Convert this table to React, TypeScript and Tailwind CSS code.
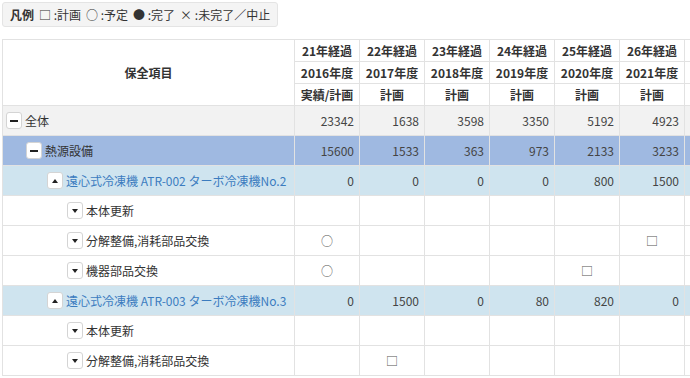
import type { ReactNode } from 'react';

type Row = {
  label: string;
  level: number;
  kind: 'total' | 'group' | 'equip' | 'item';
  toggle: 'minus' | 'up' | 'down';
  cells: (string | number)[];
};

// the 7th column runs past the window edge, so only its border shows
const YEARS = [
  { age: '21年経過', year: '2016年度', type: '実績/計画' },
  { age: '22年経過', year: '2017年度', type: '計画' },
  { age: '23年経過', year: '2018年度', type: '計画' },
  { age: '24年経過', year: '2019年度', type: '計画' },
  { age: '25年経過', year: '2020年度', type: '計画' },
  { age: '26年経過', year: '2021年度', type: '計画' },
  { age: '', year: '', type: '' },
];

const ROWS: Row[] = [
  { label: '全体', level: 0, kind: 'total', toggle: 'minus', cells: [23342, 1638, 3598, 3350, 5192, 4923, ''] },
  { label: '熱源設備', level: 1, kind: 'group', toggle: 'minus', cells: [15600, 1533, 363, 973, 2133, 3233, ''] },
  { label: '遠心式冷凍機 ATR-002 ターボ冷凍機No.2', level: 2, kind: 'equip', toggle: 'up', cells: [0, 0, 0, 0, 800, 1500, ''] },
  { label: '本体更新', level: 3, kind: 'item', toggle: 'down', cells: ['', '', '', '', '', '', ''] },
  { label: '分解整備,消耗部品交換', level: 3, kind: 'item', toggle: 'down', cells: ['○', '', '', '', '', '□', ''] },
  { label: '機器部品交換', level: 3, kind: 'item', toggle: 'down', cells: ['○', '', '', '', '□', '', ''] },
  { label: '遠心式冷凍機 ATR-003 ターボ冷凍機No.3', level: 2, kind: 'equip', toggle: 'up', cells: [0, 1500, 0, 80, 820, 0, ''] },
  { label: '本体更新', level: 3, kind: 'item', toggle: 'down', cells: ['', '', '', '', '', '', ''] },
  { label: '分解整備,消耗部品交換', level: 3, kind: 'item', toggle: 'down', cells: ['', '□', '', '', '', '', ''] },
];

const ROW_BG: Record<Row['kind'], string> = {
  total: 'bg-[#f2f2f2]',
  group: 'bg-[#9fb9e1]',
  equip: 'bg-[#cfe4ef]',
  item: 'bg-white',
};

const INDENT = ['pl-[3px]', 'pl-[23px]', 'pl-[44px]', 'pl-[64px]'];

function Toggle({ type }: { type: Row['toggle'] }) {
  return (
    <span className="mr-[3px] flex h-[17px] w-[16px] shrink-0 items-center justify-center rounded-[3px] border border-[#d4d4d4] bg-white">
      {type === 'minus' && <span className="h-[2px] w-[8px] bg-[#222]" />}
      {type === 'up' && (
        <svg width="6" height="4" viewBox="0 0 6 4">
          <path d="M0 4 L3 0 L6 4 Z" fill="#222" />
        </svg>
      )}
      {type === 'down' && (
        <svg width="6" height="4" viewBox="0 0 6 4">
          <path d="M0 0 L6 0 L3 4 Z" fill="#222" />
        </svg>
      )}
    </span>
  );
}

function Th({ children }: { children: ReactNode }) {
  return (
    <th className="h-[22px] whitespace-nowrap border border-[#e2e2e2] p-0 text-center text-[12px] font-bold text-[#333]">
      {children}
    </th>
  );
}

export default function App() {
  return (
    <div
      className="h-[378px] w-[690px] overflow-hidden bg-white text-[#333]"
      style={{ fontFamily: '"Noto Sans CJK JP", "Noto Sans", sans-serif' }}
    >
      {/* Legend */}
      <div className="ml-[2px] mt-[2px] inline-flex h-[25px] items-center gap-[5px] whitespace-nowrap rounded-[3px] border border-[#e4e4e4] bg-[#f4f4f4] pl-[7px] pr-[7px] text-[12px] leading-none">
        <span className="font-bold">凡例</span>
        <span>□ :計画</span>
        <span>○ :予定</span>
        <span>● :完了</span>
        <span>× :未完了／中止</span>
      </div>

      <table className="ml-[2px] mt-[12px] w-[747px] min-w-[747px] table-fixed border-collapse">
        <colgroup>
          <col className="w-[292px]" />
          {YEARS.map((_, i) => (
            <col key={i} className="w-[65px]" />
          ))}
        </colgroup>
        <thead>
          <tr>
            <th
              rowSpan={3}
              className="border border-[#e2e2e2] p-0 text-center text-[12px] font-bold text-[#333]"
            >
              保全項目
            </th>
            {YEARS.map((y, i) => (
              <Th key={i}>{y.age}</Th>
            ))}
          </tr>
          <tr>
            {YEARS.map((y, i) => (
              <Th key={i}>{y.year}</Th>
            ))}
          </tr>
          <tr>
            {YEARS.map((y, i) => (
              <Th key={i}>{y.type}</Th>
            ))}
          </tr>
        </thead>
        <tbody>
          {ROWS.map((row, i) => (
            <tr key={i} className={ROW_BG[row.kind]}>
              <td className={`h-[30px] border border-[#e2e2e2] p-0 ${INDENT[row.level]}`}>
                <div className="flex items-center whitespace-nowrap text-[12px]">
                  <Toggle type={row.toggle} />
                  <span className={row.kind === 'equip' ? 'text-[#3c7cbf]' : 'text-[#333]'}>{row.label}</span>
                </div>
              </td>
              {row.cells.map((c, j) =>
                typeof c === 'number' ? (
                  <td
                    key={j}
                    className="h-[30px] whitespace-nowrap border border-[#e2e2e2] p-0 pr-[5px] text-right text-[12px] text-[#444]"
                  >
                    {c}
                  </td>
                ) : (
                  <td
                    key={j}
                    className="h-[30px] border border-[#e2e2e2] p-0 text-center text-[12px] text-[#555]"
                  >
                    {c}
                  </td>
                ),
              )}
            </tr>
          ))}
        </tbody>
      </table>
    </div>
  );
}
